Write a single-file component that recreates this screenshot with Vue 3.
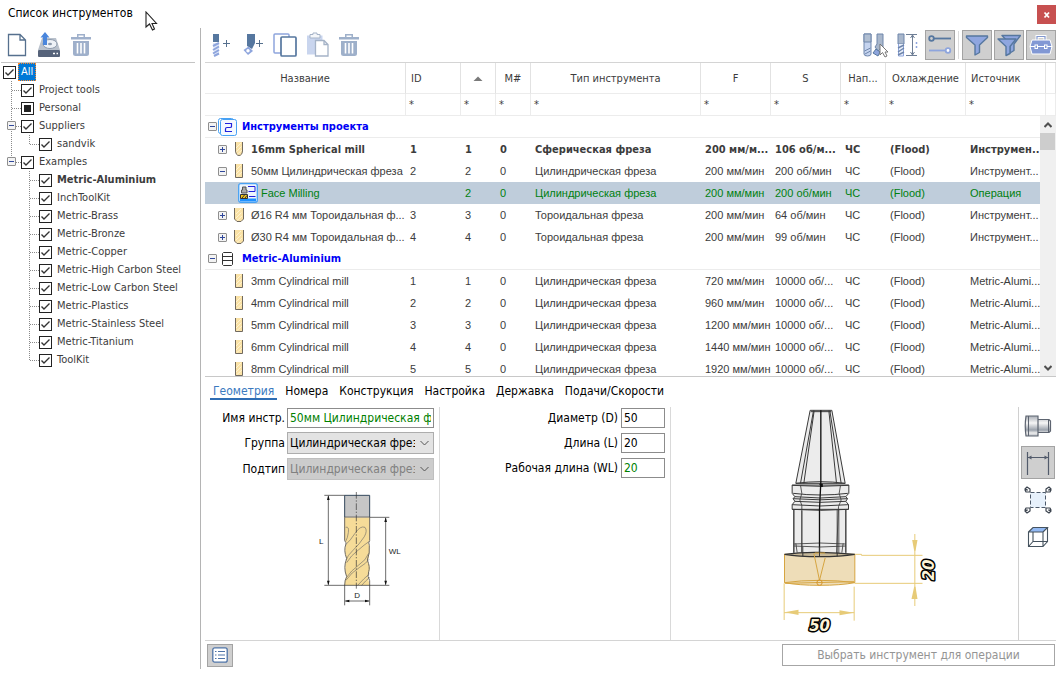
<template>
  <div class="window">
    <!-- title bar -->
    <header class="title-bar">
      <h1 class="title">Список инструментов</h1>
      <button class="close-btn" type="button" aria-label="Закрыть">
        <svg width="8" height="8" viewBox="0 0 8 8"><path d="M1.5 1.5L6 6.5M6 1.5L1.5 6.5" stroke="#fff" stroke-width="1.8" /></svg>
      </button>
    </header>

    <div class="body">
      <!-- library tree -->
      <aside class="sidebar">
        <div class="side-tools">
          <button class="icon-btn" type="button" aria-label="Создать">
            <svg width="20" height="24" viewBox="0 0 20 24"><path d="M1.5 1.5H13L18.5 7V22.500H1.500ZM13 1.500V7H18.500" fill="#fff" stroke="#56708e" stroke-width="1.300" /></svg>
          </button>
          <button class="icon-btn" type="button" aria-label="Загрузить">
            <svg width="24" height="26" viewBox="0 0 24 26">
              <path d="M5 6H19L23 18H1Z" fill="#b9c1cc" />
              <ellipse cx="13" cy="12" rx="7" ry="4.500" fill="#eef2f7" stroke="#8d9aac" />
              <ellipse cx="13" cy="12" rx="2" ry="1.200" fill="#8d9aac" />
              <rect x="1" y="18" width="22" height="7" rx="1" fill="#56637a" />
              <path d="M16 21.500H18M19.500 21.500H21" stroke="#fff" stroke-width="1.400" />
              <path d="M8 0L12.500 5.500H10V13H6V5.500H3.500Z" fill="#4a86dc" />
            </svg>
          </button>
          <button class="icon-btn" type="button" aria-label="Удалить">
            <svg width="20" height="24" viewBox="0 0 20 24">
              <path d="M0 4H20V6.500H0ZM6 1H14V4H12.500V2.500H7.500V4H6Z" fill="#9fb0cb" />
              <path d="M2 8H18V20.500Q18 23 15.500 23H4.500Q2 23 2 20.500Z" fill="#9fb0cb" />
              <path d="M6.500 10V20.500M10 10V20.500M13.500 10V20.500" stroke="#fff" stroke-width="1.600" />
            </svg>
          </button>
        </div>

        <ul class="tree">
          <li v-for="node in tree" :key="node.label" class="tree-row">
            <span v-for="(g, i) in node.guides" :key="i" class="guide">
              <svg width="18" height="18" viewBox="0 0 18 18"><path :d="guidePaths[g]" fill="none" stroke="#8a8a8a" stroke-dasharray="1 1" /></svg>
              <button v-if="node.open && i === node.guides.length - 1" class="expander tree-expander" type="button" aria-label="Свернуть"></button>
            </span>
            <label class="tree-label" :class="{ bold: node.bold, selected: node.selected }">
              <input class="check" :class="{ partial: node.partial }" type="checkbox" :checked="!node.partial" />
              <span>{{ node.label }}</span>
            </label>
          </li>
        </ul>
      </aside>

      <main class="main">
        <!-- tool list commands -->
        <div class="toolbar">
          <div class="tools-left">
            <button class="icon-btn" type="button" aria-label="Новая фреза">
              <svg width="22" height="24" viewBox="0 0 22 24">
                <path d="M2 1H8V9H2Z" fill="#56779f" />
                <path d="M2 10H8V22H3Z" fill="#dfe7f8" />
                <path d="M2 13L8 10M2 17L8 13.500M2 20.500L8 17M3 23L8 20.500" stroke="#8ea5dd" stroke-width="2" />
                <path d="M12 10.500H19M15.500 7V14" stroke="#56708e" />
              </svg>
            </button>
            <button class="icon-btn" type="button" aria-label="Новый резец">
              <svg width="22" height="24" viewBox="0 0 22 24">
                <path d="M5 1H13V10L10 16L5 13Z" fill="#56779f" />
                <path d="M1.500 17L6.500 13.500L11 18L6 22Z" fill="#8ea5dd" />
                <circle cx="6" cy="17.700" r="1.700" fill="#fff" />
                <path d="M14 10.500H21M17.500 7V14" stroke="#56708e" />
              </svg>
            </button>
            <button class="icon-btn" type="button" aria-label="Копировать">
              <svg width="24" height="26" viewBox="0 0 24 26">
                <rect x="1" y="2" width="15" height="19" rx="1" fill="#fff" stroke="#8ea5dd" stroke-width="1.500" />
                <rect x="8" y="5" width="15" height="19" rx="1" fill="#fff" stroke="#56779f" stroke-width="1.700" />
              </svg>
            </button>
            <button class="icon-btn" type="button" aria-label="Вставить">
              <svg width="24" height="26" viewBox="0 0 24 26">
                <path d="M1 3.500H16.500V22.500H1Z" fill="#c9d5ee" />
                <path d="M4 2.500H7V1H11V2.500H14V6H4Z" fill="#f5f7fa" stroke="#a5b3c7" />
                <path d="M9.500 8.500H18L22 12.500V24H9.500ZM18 8.500V12.500H22" fill="#fff" stroke="#a5b3c7" stroke-width="1.300" />
              </svg>
            </button>
            <button class="icon-btn" type="button" aria-label="Удалить инструмент">
              <svg width="20" height="24" viewBox="0 0 20 24">
                <path d="M0 4H20V6.500H0ZM6 1H14V4H12.500V2.500H7.500V4H6Z" fill="#9eb0ca" />
                <path d="M2 8H18V20.500Q18 23 15.500 23H4.500Q2 23 2 20.500Z" fill="#9eb0ca" />
                <path d="M6.500 10V20.500M10 10V20.500M13.500 10V20.500" stroke="#fff" stroke-width="1.600" />
              </svg>
            </button>
          </div>

          <div class="tools-right">
            <button class="icon-btn" type="button" aria-label="Выбор инструмента">
              <svg width="26" height="26" viewBox="0 0 26 26">
                <path d="M1 2H8V22Q8 24 4.500 24Q1 24 1 22Z" fill="#c5d4f0" stroke="#6f86ab" />
                <path d="M1 2H8V10H1Z" fill="#b1bfd2" stroke="#6f86ab" />
                <path d="M1.500 19L7.500 16M2 22L7.500 19" stroke="#6f86ab" />
                <path d="M14 2H20V15L15 19L12 15L14 12Z" fill="#a9b7cb" stroke="#6f86ab" />
                <path d="M10 21L13 17L17 20L15 24Z" fill="#8ea5dd" stroke="#56779f" />
                <path d="M17 12V23L19.500 20.500L22 25L24 24L22 20H25Z" fill="#fff" stroke="#777" />
              </svg>
            </button>
            <button class="icon-btn" type="button" aria-label="Размеры">
              <svg width="24" height="26" viewBox="0 0 24 26">
                <path d="M2 2H8V12H2Z" fill="#a9b7cb" stroke="#6f86ab" />
                <path d="M2.500 12V24H7.500V12" fill="#e9effa" stroke="#8ea5dd" />
                <path d="M2 16L8 13M2 20L8 16M2 23L8 20" stroke="#6f86ab" stroke-width="1.400" />
                <path d="M10 2.500H21M10 23.500H21M16.500 3V23M14.500 6L16.500 3L18.500 6M14.500 20L16.500 23L18.500 20" fill="none" stroke="#6f7f96" />
                <path d="M20.500 10V12M20.500 14V16" stroke="#8ea5dd" stroke-width="1.500" />
              </svg>
            </button>
            <button class="icon-btn pressed" type="button" aria-label="Параметры">
              <svg width="24" height="24" viewBox="0 0 24 24">
                <path d="M6 5.500H23" stroke="#56779f" stroke-width="1.800" /><circle cx="3.500" cy="5.500" r="2.300" fill="none" stroke="#56779f" stroke-width="1.800" />
                <path d="M1 17.500H17" stroke="#8ea5dd" stroke-width="1.800" /><circle cx="20" cy="17.500" r="2.300" fill="#fff" stroke="#8ea5dd" stroke-width="1.800" />
              </svg>
            </button>
            <span class="tool-sep"></span>
            <button class="icon-btn pressed" type="button" aria-label="Фильтр">
              <svg width="24" height="24" viewBox="0 0 24 24"><path d="M1.500 3H22.500V4.500L14.500 12V19.500L10 22V12L1.500 4.500Z" fill="#8fa6df" stroke="#56779f" stroke-width="1.400" stroke-linejoin="round" /></svg>
            </button>
            <button class="icon-btn pressed" type="button" aria-label="Сложный фильтр">
              <svg width="24" height="24" viewBox="0 0 24 24">
                <path d="M5 2.500H23.500L17 11V17.500L13 20V11Z" fill="#8fa6df" stroke="#56779f" stroke-width="1.400" stroke-linejoin="round" />
                <path d="M1 6H19L13 13.500V20.500L9 22.500V13.500Z" fill="#8fa6df" stroke="#56779f" stroke-width="1.400" stroke-linejoin="round" />
              </svg>
            </button>
            <button class="icon-btn pressed" type="button" aria-label="Библиотеки">
              <svg width="24" height="24" viewBox="0 0 24 24">
                <path d="M8 7V3.500H16V7" fill="none" stroke="#fff" stroke-width="3" /><path d="M8 7V3.500H16V7" fill="none" stroke="#8298cf" stroke-width="1.200" />
                <path d="M3 7H21L23 13.500L21 21H3L1 13.500Z" fill="#8298d4" stroke="#fff" />
                <path d="M1 13.500H6M8.500 13.500H15.500M18 13.500H23" stroke="#fff" />
                <rect x="6" y="12" width="2.500" height="3.500" fill="none" stroke="#fff" /><rect x="15.500" y="12" width="2.500" height="3.500" fill="none" stroke="#fff" />
              </svg>
            </button>
          </div>
        </div>

        <!-- tool table -->
        <section class="grid-wrap">
          <table class="grid">
            <colgroup>
              <col class="c-name" /><col class="c-id" /><col class="c-s" /><col class="c-s" /><col /><col class="c-f" /><col class="c-f" /><col class="c-dir" /><col class="c-cool" /><col class="c-cool" /><col class="c-end" />
            </colgroup>
            <thead>
              <tr class="head">
                <th scope="col">Название</th>
                <th scope="col" class="left">ID</th>
                <th scope="col" aria-label="Номер"><svg width="10" height="5" viewBox="0 0 10 5"><path d="M0.500 5L5 0.500L9.500 5Z" fill="#7a7a7a" /></svg></th>
                <th scope="col">M#</th>
                <th scope="col">Тип инструмента</th>
                <th scope="col">F</th>
                <th scope="col">S</th>
                <th scope="col">Нап...</th>
                <th scope="col">Охлаждение</th>
                <th scope="col" class="left">Источник</th>
                <th></th>
              </tr>
              <tr class="filter">
                <td></td>
                <td v-for="n in 9" :key="n">*</td>
                <td></td>
              </tr>
            </thead>
            <tbody>
              <tr v-for="(row, i) in rows" :key="i" :class="{ group: row.group, bold: row.bold, current: row.current }">
                <td v-if="row.group" colspan="11">
                  <div class="name">
                    <button class="expander" type="button" aria-label="Свернуть"></button>
                    <svg v-if="row.icon === 'project'" width="19" height="18" viewBox="0 0 19 18">
                      <rect x="0.500" y="0.500" width="15" height="15" rx="2" fill="#fff" stroke="#47a1f4" />
                      <rect x="2.500" y="1.500" width="16" height="16" rx="2" fill="#f4f9ff" stroke="#47a1f4" />
                      <path d="M7 5.500H13.500V8.500Q13.500 9.500 12 9.500H9Q7.500 9.500 7.500 11V13.500H14" fill="none" stroke="#2222dd" stroke-width="1.200" />
                    </svg>
                    <svg v-else width="19" height="14" viewBox="0 0 19 14">
                      <path d="M4.500 1.500L5.500 0.500H13.500L14.500 1.500V12.500L13.500 13.500H5.500L4.500 12.500ZM4.500 4.500H14.500M4.500 8.500H14.500" fill="#fff" stroke="#333" />
                    </svg>
                    <span>{{ row.name }}</span>
                  </div>
                </td>
                <template v-else>
                  <td>
                    <div v-if="row.current" class="name operation">
                      <svg width="20" height="20" viewBox="0 0 20 20">
                        <rect x="0.700" y="0.700" width="18.600" height="18.600" rx="2" fill="#eef5fd" stroke="#47a1f4" stroke-width="1.300" />
                        <path d="M2 15.500H18V18.500H2Z" fill="#1e90ff" />
                        <path d="M4.500 4H8V7H9V10H3.500V7H4.500Z" fill="#aaa" stroke="#555" />
                        <path d="M2.500 11.500H9.500V15.500H2.500Z" fill="#f5c518" stroke="#333" /><path d="M4 15L6.500 12M7 15L9 12.500" stroke="#333" />
                        <path d="M10 3.500H17V8.500H10.500M11 13.500H17.500" fill="none" stroke="#2222dd" />
                      </svg>
                      <span>{{ row.name }}</span>
                    </div>
                    <div v-else class="name tool">
                      <button v-if="row.toggle" class="expander" :class="{ plus: row.toggle === '+' }" type="button" aria-label="Операции"></button>
                      <span v-else class="no-expander"></span>
                      <svg width="10" height="14" viewBox="0 0 10 14">
                        <path :d="shapes[row.shape]" fill="#fae2a6" />
                        <path d="M2 6L7 1M2 10L7.500 4.500M3 12.500L8 8" stroke="#fff3d0" />
                        <path :d="shapes[row.shape]" fill="none" stroke="#70695f" />
                      </svg>
                      <span>{{ row.name }}</span>
                    </div>
                  </td>
                  <td>{{ row.id }}</td>
                  <td>{{ row.num }}</td>
                  <td>0</td>
                  <td>{{ row.type }}</td>
                  <td>{{ row.f }}</td>
                  <td>{{ row.s }}</td>
                  <td>ЧС</td>
                  <td>(Flood)</td>
                  <td colspan="2" class="source">{{ row.source }}</td>
                </template>
              </tr>
            </tbody>
          </table>
          <div class="scrollbar">
            <button type="button" aria-label="Вверх"><svg width="8" height="6" viewBox="0 0 8 6"><path d="M0.500 5L4 1.500L7.500 5" fill="none" stroke="#505050" stroke-width="2" /></svg></button>
            <div class="thumb"></div>
            <button class="down" type="button" aria-label="Вниз"><svg width="8" height="6" viewBox="0 0 8 6"><path d="M0.500 1L4 4.500L7.500 1" fill="none" stroke="#505050" stroke-width="2" /></svg></button>
          </div>
        </section>

        <!-- tool properties -->
        <nav class="tabs">
          <button v-for="tab in tabs" :key="tab" type="button" class="tab" :class="{ active: tab === activeTab }" @click="activeTab = tab">{{ tab }}</button>
        </nav>

        <section class="details">
          <div class="general">
            <label for="tool-name">Имя инстр.</label>
            <input id="tool-name" class="field changed" type="text" value="50мм Цилиндрическая фреза" />
            <label for="tool-group">Группа</label>
            <select id="tool-group" class="combo"><option>Цилиндрическая фреза</option></select>
            <label for="tool-subtype">Подтип</label>
            <select id="tool-subtype" class="combo" disabled><option>Цилиндрическая фреза</option></select>
            <svg class="mill" viewBox="48 30 261 351">
              <rect x="131" y="46" width="75" height="65" fill="#c6c6c6" />
              <path d="M131 111H206V180Q200 190 204 196Q208 215 203 235Q198 243 205 255Q208 275 200 290L206 316H131Q131 300 137 290Q128 265 137 237Q128 210 137 190L131 180Z" fill="#f6dc98" />
              <path d="M131 111H206" stroke="#888" stroke-width="4" />
              <path d="M131 111V182Q136 188 135 192Q127 210 137 236Q126 262 137 290Q131 300 131 316M206 111V182Q201 188 205 196Q207 220 199 240Q208 262 203 275Q198 290 206 302V316" fill="none" stroke="#6f6a60" stroke-width="3" />
              <path d="M134 142Q145 138 142 158Q140 174 134 184M134 194Q148 182 162 160Q178 136 192 142Q200 152 190 170Q176 192 155 212Q140 226 135 240M205 184Q190 194 172 210Q150 226 137 248M137 292Q150 272 172 256Q196 240 203 220M134 302Q152 276 176 262Q196 250 204 238M170 316Q190 294 205 282M182 316Q194 302 206 292" fill="none" stroke="#77736a" stroke-width="2" />
              <path d="M131 111V46H206V111" fill="none" stroke="#33485c" stroke-width="3" />
              <path d="M166 36V326" stroke="#333" stroke-width="2" stroke-dasharray="20 5 4 5" />
              <path d="M70 46H131M70 316H265M206 112H265M82 48V314M254 114V314M131 316V376M206 316V376M133 363H204" stroke="#222" stroke-width="2" />
              <path d="M82 46L78 60H86ZM82 316L78 302H86ZM254 112L250 126H258ZM254 316L250 302H258ZM131 363L145 359V367ZM206 363L192 359V367Z" fill="#111" />
              <g fill="#222" font-size="24"><text x="54" y="191">L</text><text x="263" y="223">WL</text><text x="160" y="355">D</text></g>
            </svg>
          </div>

          <div class="sizes">
            <label for="size-d">Диаметр (D)</label><input id="size-d" class="field" type="text" value="50" />
            <label for="size-l">Длина (L)</label><input id="size-l" class="field" type="text" value="20" />
            <label for="size-wl">Рабочая длина (WL)</label><input id="size-wl" class="field changed" type="text" value="20" />
          </div>

          <div class="preview">
            <svg class="model" viewBox="-204 21 1032 699">
              <!-- holder -->
              <g fill="#ececec" stroke="#3a3a3a" stroke-width="3">
                <path d="M160 320H316V458L310 468H164L160 458Z" />
                <path d="M155 255H325V280L316 290L321 296L316 304L324 314V328H155V314L163 304L158 296L163 290L155 280Z" />
                <path d="M209 31H274L314 250H166Z" />
                <g fill="none">
                  <path d="M211 35H272M219 32L180 250M221 32L190 250M265 32L288 250M268 32L302 250" />
                  <path d="M166 250Q240 240 314 250M155 256Q240 262 325 256M158 280Q240 290 322 280M163 290Q240 298 316 290M158 296Q240 303 321 296M163 304Q240 310 316 304M155 314Q240 322 324 314M155 328Q240 334 324 328" />
                  <path d="M180 256L184 280L178 300L184 316V458M300 256L296 280L302 300L294 320L288 466M184 332V458M290 330V460M295 330V460M160 330V458M316 330V458M160 432Q240 426 316 432M160 438Q240 444 316 438M166 430L170 458M308 430L304 458M187 440V466" stroke-width="2.500" />
                </g>
                <path d="M241 31V245L237 330V468" stroke="#111" stroke-width="4" fill="none" />
                <path d="M236 251H247V261H240Z" fill="#111" stroke="none" />
              </g>
              <!-- cutter -->
              <path d="M132 463H343V548Q300 556 237 556T132 548Z" fill="#ecd9b0" fill-opacity="0.900" stroke="#d6a541" stroke-width="3" />
              <path d="M132 463Q180 456 237 457T343 463Q300 470 237 470T132 463Z" fill="#c4b697" stroke="#333" stroke-width="4" />
              <path d="M132 548Q180 541 237 541T343 548M134 550L341 545M220 460L237 541L254 474M223 459H254" fill="none" stroke="#d6a541" stroke-width="3" />
              <path d="M187 458V469M237 440V470M290 458V469" stroke="#333" stroke-width="3" />
              <circle cx="237" cy="548" r="8" fill="none" stroke="#d6952c" stroke-width="3" />
              <!-- dimensions -->
              <path d="M343 463H363V466H546M343 550H546M523 402V618M131 550V660M341 560V662M131 638H341" fill="none" stroke="#e7cb78" stroke-width="3" />
              <path d="M515 420H531L525 452H521ZM521 560H525L531 597H513ZM132 637L174 629V645ZM340 638L297 631V646Z" fill="#e7cb78" />
              <g class="dim">
                <text x="206" y="694">50</text>
                <text transform="translate(580 541) rotate(-90)">20</text>
              </g>
            </svg>
          </div>

          <div class="view-tools">
            <button class="view-btn" type="button" aria-label="Оправка">
              <svg width="28" height="24" viewBox="0 0 28 24">
                <defs><linearGradient id="steel" x1="0" y1="0" x2="0" y2="1"><stop offset="0" stop-color="#a9aeb6" /><stop offset="0.350" stop-color="#f6f6f6" /><stop offset="0.700" stop-color="#9aa1ab" /><stop offset="0.850" stop-color="#eee" /><stop offset="1" stop-color="#b5bac2" /></linearGradient></defs>
                <path d="M2 2H14V22H2Q0.500 12 2 2ZM14 5.500H25L26.500 7V17L25 18.500H14Z" fill="url(#steel)" stroke="#5d6470" stroke-width="1.200" />
                <path d="M4.500 2V22M24.500 6V18" stroke="#5d6470" />
              </svg>
            </button>
            <button class="view-btn pressed" type="button" aria-label="Показать размеры">
              <svg width="28" height="28" viewBox="0 0 28 28"><path d="M3.500 3V26M24.500 3V26" stroke="#525b6b" stroke-width="1.200" /><path d="M4 8.500H24" stroke="#525b6b" /><path d="M4 8.500L7.500 6.500V10.500ZM24 8.500L20.500 6.500V10.500Z" fill="#525b6b" /></svg>
            </button>
            <button class="view-btn" type="button" aria-label="Показать всё">
              <svg width="28" height="28" viewBox="0 0 28 28">
                <rect x="6.500" y="6.500" width="15" height="15" fill="#e7f1fc" stroke="#4d5a6b" stroke-dasharray="4 2" />
                <g fill="#fff" stroke="#3c444f" stroke-width="1.200" stroke-linejoin="round">
                  <path d="M1 3L3 1L6 3V6H2L1 4L3.500 4Z" /><path d="M27 3L25 1L22 3V6H26L27 4L24.500 4Z" /><path d="M1 25L3 27L6 25V22H2L1 24L3.500 24Z" /><path d="M27 25L25 27L22 25V22H26L27 24L24.500 24Z" />
                </g>
              </svg>
            </button>
            <button class="view-btn" type="button" aria-label="Вид">
              <svg width="22" height="22" viewBox="0 0 22 22">
                <path d="M1.500 6L6 1.500H20.500L16 6Z" fill="#92b9f3" />
                <path d="M1.500 6H16V20.500H1.500ZM1.500 6L6 1.500H20.500L16 6M20.500 1.500V15.500L16 20.500M6 6V15.500H20.500M6 15.500L1.500 20.500" fill="none" stroke="#46535f" stroke-width="1.100" />
              </svg>
            </button>
          </div>
        </section>

        <footer class="footer">
          <button class="list-btn pressed" type="button" aria-label="Список">
            <svg width="16" height="16" viewBox="0 0 16 16"><rect x="0.800" y="0.800" width="14.400" height="14.400" rx="2" fill="#fff" stroke="#4f74a8" stroke-width="1.300" /><path d="M3 4.500H4.500M3 8H4.500M3 11.500H4.500M6 4.500H13M6 8H13M6 11.500H13" stroke="#4f74a8" stroke-width="1.200" /></svg>
          </button>
          <button class="choose-btn" type="button" disabled>Выбрать инструмент для операции</button>
        </footer>
      </main>
    </div>

    <svg class="pointer" width="14" height="20" viewBox="0 0 14 20"><path d="M1 1V16L4.500 13L7.500 19L9.500 18L7 12.500H11.500Z" fill="#fff" stroke="#222" stroke-width="1.100" /></svg>
  </div>
</template>

<script setup>
import { ref } from 'vue'

// dotted branch lines of the tree, one 18px cell each
const guidePaths = {
  none: '',
  pipe: 'M8.5 0V18',
  tee: 'M8.5 0V18M9 9.5H18',
  elbow: 'M8.5 0V9.5H18',
}

const kits = ['InchToolKit', 'Metric-Brass', 'Metric-Bronze', 'Metric-Copper', 'Metric-High Carbon Steel', 'Metric-Low Carbon Steel', 'Metric-Plastics', 'Metric-Stainless Steel', 'Metric-Titanium']

const tree = [
  { label: 'All', guides: [], selected: true },
  { label: 'Project tools', guides: ['tee'] },
  { label: 'Personal', guides: ['tee'], partial: true },
  { label: 'Suppliers', guides: ['tee'], open: true },
  { label: 'sandvik', guides: ['pipe', 'elbow'] },
  { label: 'Examples', guides: ['elbow'], open: true },
  { label: 'Metric-Aluminium', guides: ['none', 'tee'], bold: true },
  ...kits.map(label => ({ label, guides: ['none', 'tee'] })),
  { label: 'ToolKit', guides: ['none', 'elbow'] },
]

const shapes = {
  flat: 'M1.5 0V13.5H8.5V0',
  ball: 'M1.5 0V9Q2 13.5 5 13.5T8.5 9V0',
  torus: 'M0.5 0V11L3 13.5H7L9.5 11V0',
}

const kitTools = [[3, 720], [4, 960], [5, 1200], [6, 1440], [8, 1920]]

const rows = [
  { group: true, icon: 'project', name: 'Инструменты проекта' },
  { toggle: '+', shape: 'ball', name: '16mm Spherical mill', id: 1, num: 1, type: 'Сферическая фреза', f: '200 мм/м...', s: '106 об/м...', source: 'Инструмен..', bold: true },
  { toggle: '-', shape: 'flat', name: '50мм Цилиндрическая фреза', id: 2, num: 2, type: 'Цилиндрическая фреза', f: '200 мм/мин', s: '200 об/мин', source: 'Инструмент...' },
  { current: true, name: 'Face Milling', num: 2, type: 'Цилиндрическая фреза', f: '200 мм/мин', s: '200 об/мин', source: 'Операция' },
  { toggle: '+', shape: 'torus', name: 'Ø16 R4 мм Тороидальная ф...', id: 3, num: 3, type: 'Тороидальная фреза', f: '200 мм/мин', s: '64 об/мин', source: 'Инструмент...' },
  { toggle: '+', shape: 'torus', name: 'Ø30 R4 мм Тороидальная ф...', id: 4, num: 4, type: 'Тороидальная фреза', f: '200 мм/мин', s: '99 об/мин', source: 'Инструмент...' },
  { group: true, icon: 'library', name: 'Metric-Aluminium' },
  ...kitTools.map(([d, f], i) => ({ shape: 'flat', name: d + 'mm Cylindrical mill', id: i + 1, num: i + 1, type: 'Цилиндрическая фреза', f: f + ' мм/мин', s: '10000 об/...', source: 'Metric-Alumi...' })),
]

const tabs = ['Геометрия', 'Номера', 'Конструкция', 'Настройка', 'Державка', 'Подачи/Скорости']
const activeTab = ref('Геометрия')
</script>

<style>
body { margin: 0; background: #fff; }
</style>

<style scoped>
* { box-sizing: border-box; }
button, input, select { font: inherit; color: inherit; margin: 0; padding: 0; border: 0; background: none; border-radius: 0; }
svg { display: block; flex-shrink: 0; }
.window { position: relative; height: 100vh; display: flex; flex-direction: column; padding-bottom: 4px; overflow: hidden; color: #000; font: 12px "DejaVu Sans Condensed", "Noto Sans", sans-serif; }
.title-bar { height: 28px; flex-shrink: 0; display: flex; justify-content: space-between; padding-left: 8px; }
.title { margin: 0; font-size: 12px; line-height: 27px; font-weight: 400; }
.close-btn { width: 19px; height: 19px; margin-top: 5px; background: #c75050; display: grid; place-items: center; }
.pointer { position: absolute; left: 145px; top: 11px; }
.body { flex: 1; min-height: 0; display: flex; }

.sidebar { width: 201px; flex-shrink: 0; border-right: 1px solid #b4b4b4; padding-right: 5px; }
.side-tools { height: 35px; display: flex; align-items: center; gap: 10px; padding-left: 6px; border-bottom: 1px solid #c4c4c4; margin-left: 1px; }
.icon-btn { display: grid; place-items: center; flex-shrink: 0; }
.pressed { background: #cfcfcf; border: 1px solid #a3a3a3; }
.tree { list-style: none; margin: 0; padding: 0 0 0 3px; font-size: 11px; color: #3c3c3c; }
.tree-row { display: flex; height: 18px; }
.guide { position: relative; width: 18px; }
.tree-expander { position: absolute; left: 4px; top: 4px; }
.tree-label { display: flex; align-items: center; gap: 2px; white-space: nowrap; }
.tree-label span { line-height: 16px; padding: 1px 3px; }
.selected span { background: #0078d7; color: #fff; outline: 1px dotted #ff8728; outline-offset: -1px; }
.bold { font-weight: 700; }
.check { appearance: none; width: 13px; height: 13px; border: 1px solid #222; background: #fff; }
.check:checked { background: url("data:image/svg+xml,%3Csvg xmlns='http://www.w3.org/2000/svg' viewBox='0 0 11 11'%3E%3Cpath d='M1.500 5.500L4 8L9.500 2.500' fill='none' stroke='%23333' stroke-width='1.400'/%3E%3C/svg%3E"); }
.check.partial { background: #222; box-shadow: inset 0 0 0 2px #fff; }
.expander { width: 9px; height: 9px; flex-shrink: 0; border: 1px solid #8f8f8f; border-radius: 1px; background: linear-gradient(#30489c, #30489c) center / 5px 1px no-repeat, #f3f3f3; }
.expander.plus { background: linear-gradient(#30489c, #30489c) center / 5px 1px no-repeat, linear-gradient(#30489c, #30489c) center / 1px 5px no-repeat, #f3f3f3; }

.main { flex: 1; min-width: 0; display: flex; flex-direction: column; padding-left: 4px; }
.toolbar { height: 34px; flex-shrink: 0; display: flex; justify-content: space-between; align-items: center; padding-left: 6px; }
.tools-left { display: flex; align-items: center; gap: 9px; }
.tools-right { display: flex; align-items: center; gap: 2px; }
.tools-right .icon-btn { width: 30px; height: 30px; }
.tool-sep { width: 1px; height: 28px; margin: 0 1px; background: #dcdcdc; }

.grid-wrap { position: relative; flex: 1; min-height: 0; overflow: hidden; border-top: 1px solid #d4d4d4; border-bottom: 1px solid #c8c8c8; }
.grid { width: 100%; table-layout: fixed; border-collapse: separate; border-spacing: 0; font-size: 11px; color: #3c3c3c; }
.c-name { width: 201px; }
.c-id { width: 55px; }
.c-s { width: 35px; }
.c-f { width: 70px; }
.c-dir { width: 45px; }
.c-cool { width: 80px; }
.c-end { width: 10px; }
.grid th, .grid td { height: 22px; padding: 0 0 0 4px; white-space: nowrap; text-align: left; }
.grid tbody tr:not(.bold):not(.group) { font-family: "Liberation Sans", sans-serif; }
.grid .head th { height: 31px; padding: 0 5px; font-weight: 400; text-align: center; border-right: 1px solid #e2e2e2; border-bottom: 1px solid #ececec; }
.grid .head .left { text-align: left; }
.head svg { margin: 0 auto; }
.grid .filter td { padding-left: 3px; border-right: 1px solid #ececec; border-bottom: 1px solid #ececec; }
.grid .group td { padding-left: 3px; border-bottom: 1px solid #ececec; color: #0000f5; font-weight: 700; }
.current { color: #00800f; }
.current td { background: #bfcddb; }
.name { display: flex; align-items: center; gap: 3px; }
.group .name { gap: 1px; }
.group .name span { padding-left: 4px; }
.tool { gap: 7px; padding-left: 9px; }
.operation { padding-left: 29px; }
.no-expander { width: 9px; }
.scrollbar { position: absolute; top: 53px; right: 0; bottom: 0; width: 16px; background: #f0f0f0; display: flex; flex-direction: column; }
.scrollbar button { height: 17px; display: grid; place-items: center; }
.thumb { height: 17px; background: #cdcdcd; margin-right: 1px; }
.down { margin-top: auto; }

.tabs { display: flex; gap: 5px; padding: 5px 0 0 5px; height: 24px; flex-shrink: 0; }
.tab { height: 18px; padding: 1px 3px 0; border-bottom: 2px solid transparent; white-space: nowrap; }
.tab.active { color: #3b7abf; border-color: #2e6db4; }
.details { height: 240px; flex-shrink: 0; display: flex; border-bottom: 1px solid #d4d4d4; }
.general { width: 235px; border-right: 1px solid #d9d9d9; margin-top: 6px; padding: 1px 5px 0 0; display: grid; grid-template-columns: 80px 1fr; grid-template-rows: 20px 22px 22px 1fr; gap: 4px 2px; align-items: center; }
.general label, .sizes label { text-align: right; white-space: nowrap; }
.field { min-width: 0; width: 100%; height: 20px; padding: 0 2px; border: 1px solid #8c8c8c; background: #fff; }
.changed { color: #008000; }
.combo { min-width: 0; width: 100%; height: 22px; padding: 0 18px 0 2px; border: 1px solid #adadad; appearance: none; background: url("data:image/svg+xml,%3Csvg xmlns='http://www.w3.org/2000/svg' viewBox='0 0 9 6'%3E%3Cpath d='M0.500 1L4.500 5L8.500 1' fill='none' stroke='%23555'/%3E%3C/svg%3E") right 4px center / 9px 6px no-repeat, #e3e3e3; }
.combo:disabled { opacity: 1; color: #808080; background-color: #cccccc; border-color: #bfbfbf; }
.mill { grid-column: 2; justify-self: center; align-self: start; width: 87px; height: 117px; margin-top: 6px; font-family: "Liberation Sans", sans-serif; }
.sizes { width: 231px; margin-top: 6px; border-right: 1px solid #d9d9d9; padding: 1px 5px 0 0; display: grid; grid-template-columns: 1fr 44px; grid-auto-rows: 20px; gap: 5px 3px; align-content: start; align-items: center; }
.preview { flex: 1; min-width: 0; padding-top: 6px; }
.model { width: 100%; height: 233px; }
.dim { font: italic 700 50px "DejaVu Sans Condensed", sans-serif; fill: #fdf3d6; stroke: #000; stroke-width: 9px; stroke-linejoin: round; paint-order: stroke; }
.view-tools { width: 38px; margin-top: 6px; border-left: 1px solid #d0d0d0; display: flex; flex-direction: column; align-items: center; gap: 4px; padding-top: 2px; }
.view-btn { width: 34px; height: 33px; display: grid; place-items: center; }

.footer { height: 28px; flex-shrink: 0; display: flex; justify-content: space-between; align-items: center; padding: 0 1px 0 2px; }
.list-btn { width: 26px; height: 23px; display: grid; place-items: center; }
.choose-btn { width: 273px; height: 22px; border: 1px solid #a6a6a6; color: #949494; }
</style>
